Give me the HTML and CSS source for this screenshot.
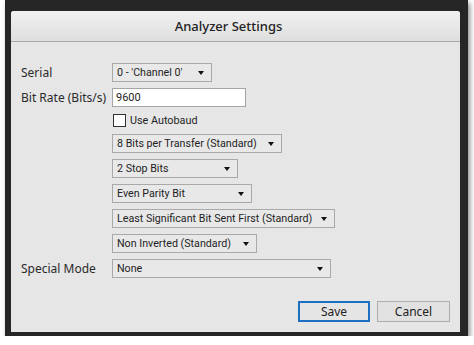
FILE: index.html
```html
<!DOCTYPE html>
<html lang="en">
<head>
    <meta charset="UTF-8">
    <title>Analyzer Settings</title>
    <link rel="stylesheet" href="styles.css">
</head>
<body>
    <div class="window">
        <div class="dialog">
            <div class="dialog-header">Analyzer Settings</div>
            <div class="dialog-body">
                <div class="row">
                    <span class="label">Serial</span>
                    <div class="select w-serial"><span>0 - 'Channel 0'</span><i class="arrow"></i></div>
                </div>
                <div class="row">
                    <span class="label">Bit Rate (Bits/s)</span>
                    <div class="input">9600</div>
                </div>
                <div class="row row-check">
                    <span class="label"></span>
                    <span class="checkbox"></span>
                    <span class="check-text">Use Autobaud</span>
                </div>
                <div class="row">
                    <span class="label"></span>
                    <div class="select w-bits"><span>8 Bits per Transfer (Standard)</span><i class="arrow"></i></div>
                </div>
                <div class="row">
                    <span class="label"></span>
                    <div class="select w-stop"><span>2 Stop Bits</span><i class="arrow"></i></div>
                </div>
                <div class="row">
                    <span class="label"></span>
                    <div class="select w-parity"><span>Even Parity Bit</span><i class="arrow"></i></div>
                </div>
                <div class="row">
                    <span class="label"></span>
                    <div class="select w-order"><span>Least Significant Bit Sent First (Standard)</span><i class="arrow"></i></div>
                </div>
                <div class="row">
                    <span class="label"></span>
                    <div class="select w-invert"><span>Non Inverted (Standard)</span><i class="arrow"></i></div>
                </div>
                <div class="row">
                    <span class="label">Special Mode</span>
                    <div class="select w-mode"><span>None</span><i class="arrow"></i></div>
                </div>
            </div>
            <div class="dialog-footer">
                <button class="btn btn-primary">Save</button>
                <button class="btn">Cancel</button>
            </div>
        </div>
    </div>
</body>
</html>
```

FILE: styles.css
```css
* {
    margin: 0;
    padding: 0;
    box-sizing: border-box;
}

body {
    background: #fff;
    font-family: 'Noto Sans', 'Open Sans', sans-serif;
    font-size: 11.5px;
    color: #1e1e1e;
}

.window {
    margin-left: 5px;
    width: 463px;
    height: 336px;
    background: #262626;
    padding: 11px 8px 4px 6px;
    box-shadow: 2px 3px 5px rgba(0, 0, 0, 0.45);
}

.dialog {
    height: 100%;
    background: #e6e6e6;
    border-radius: 3px 3px 0 0;
    display: flex;
    flex-direction: column;
}

.dialog-header {
    height: 31px;
    line-height: 30px;
    text-align: center;
    padding-right: 14px;
    font-size: 13px;
    font-weight: 500;
    color: #222;
    background: linear-gradient(#f1f1f1, #dedede);
    border-bottom: 1px solid #a9a9a9;
    border-radius: 3px 3px 0 0;
}

.dialog-body {
    flex: 1;
    padding: 21px 10px 0 10px;
}

.row {
    display: flex;
    align-items: center;
    height: 19px;
    margin-bottom: 6px;
}

.row-check {
    height: 15px;
}

.label {
    width: 91px;
    flex: none;
    font-size: 12px;
    color: #2a2a2a;
}

.select {
    position: relative;
    height: 19px;
    line-height: 18px;
    padding-left: 4px;
    border: 1px solid #a9a9a9;
    background: #e8e8e8;
    white-space: nowrap;
    font-family: Roboto, 'Noto Sans', sans-serif;
    font-size: 10.7px;
}

.arrow {
    position: absolute;
    right: 7px;
    top: 7px;
    border-left: 3.5px solid transparent;
    border-right: 3.5px solid transparent;
    border-top: 4px solid #111;
}

.w-serial { width: 100px; }
.w-bits { width: 170px; }
.w-stop { width: 126px; }
.w-parity { width: 140px; }
.w-order { width: 223px; }
.w-invert { width: 145px; }
.w-mode { width: 219px; }

.input {
    width: 134px;
    height: 19px;
    line-height: 18px;
    padding-left: 3px;
    background: #fff;
    border: 1px solid #a4a4a4;
    font-family: Roboto, 'Noto Sans', sans-serif;
    font-size: 11px;
}

.checkbox {
    width: 13px;
    height: 13px;
    margin-left: 1px;
    background: #fff;
    border: 1px solid #333;
}

.check-text {
    margin-left: 4px;
    font-family: Roboto, 'Noto Sans', sans-serif;
    font-size: 10.8px;
}

.dialog-footer {
    display: flex;
    justify-content: flex-end;
    gap: 7px;
    padding: 0 10px 10px 0;
}

.btn {
    width: 73px;
    height: 21px;
    font-family: 'Noto Sans', 'Open Sans', sans-serif;
    font-size: 12px;
    color: #222;
    background: #e1e1e1;
    border: 1px solid #adadad;
}

.btn-primary {
    width: 72px;
    background: #e5e5e5;
    border: 2px solid #1c6fc2;
}
```
